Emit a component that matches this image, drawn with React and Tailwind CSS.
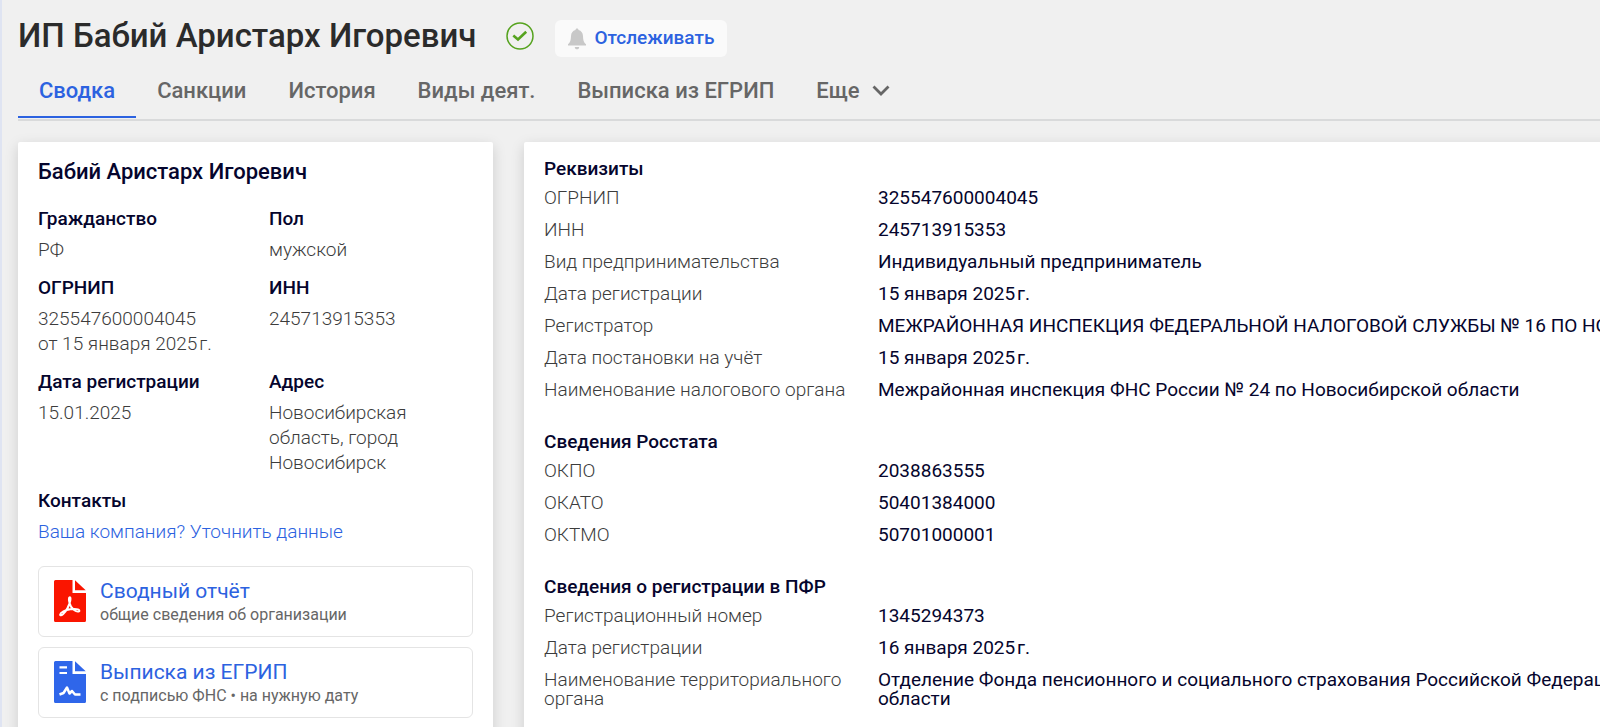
import React from 'react';

const tabs = ['Сводка', 'Санкции', 'История', 'Виды деят.', 'Выписка из ЕГРИП'];

const person = [
    { label: 'Гражданство', value: ['РФ'] },
    { label: 'Пол', value: ['мужской'] },
    { label: 'ОГРНИП', value: ['325547600004045', 'от 15 января 2025\u200aг.'] },
    { label: 'ИНН', value: ['245713915353'] },
    { label: 'Дата регистрации', value: ['15.01.2025'] },
    { label: 'Адрес', value: ['Новосибирская', 'область, город', 'Новосибирск'] },
];

const sections = [
    {
        title: 'Реквизиты',
        rows: [
            ['ОГРНИП', '325547600004045'],
            ['ИНН', '245713915353'],
            ['Вид предпринимательства', 'Индивидуальный предприниматель'],
            ['Дата регистрации', '15 января 2025\u200aг.'],
            ['Регистратор', 'МЕЖРАЙОННАЯ ИНСПЕКЦИЯ ФЕДЕРАЛЬНОЙ НАЛОГОВОЙ СЛУЖБЫ № 16 ПО НОВОСИБИРСКОЙ ОБЛАСТИ'],
            ['Дата постановки на учёт', '15 января 2025\u200aг.'],
            ['Наименование налогового органа', 'Межрайонная инспекция ФНС России № 24 по Новосибирской области'],
        ],
    },
    {
        title: 'Сведения Росстата',
        rows: [
            ['ОКПО', '2038863555'],
            ['ОКАТО', '50401384000'],
            ['ОКТМО', '50701000001'],
        ],
    },
    {
        title: 'Сведения о регистрации в ПФР',
        rows: [
            ['Регистрационный номер', '1345294373'],
            ['Дата регистрации', '16 января 2025\u200aг.'],
            ['Наименование территориального органа', 'Отделение Фонда пенсионного и социального страхования Российской Федерации по Новосибирской\nобласти'],
        ],
    },
];

const CheckIcon = () => (
    <svg className="h-7 w-7 shrink-0" viewBox="0 0 28 28" fill="none" stroke="#56a31f">
        <circle cx="14" cy="14" r="13" strokeWidth="1.5" />
        <path d="M7.3 13.4l4.7 4 8.2-7.6" strokeWidth="2.6" />
    </svg>
);

const BellIcon = () => (
    <svg className="h-[22px] w-[18px] shrink-0" viewBox="0 0 18 22" fill="#c8c8c8">
        <path d="M9 0.5c1 0 1.5.7 1.5 1.6 2.9.8 4.3 2.9 4.5 5.9.2 4.2.6 6.2 3 8.3v1.2H0v-1.2c2.4-2.1 2.8-4.1 3-8.3.2-3 1.6-5.1 4.5-5.9C7.5 1.2 8 .5 9 .5z" />
        <path d="M6.8 19h4.4c0 1.4-.9 2.3-2.2 2.3S6.8 20.4 6.8 19z" />
    </svg>
);

const PdfIcon = () => (
    <svg className="h-[42px] w-8 shrink-0" viewBox="0 0 32 42">
        <path d="M1.5 0H18.5V13H32V40.5Q32 42 30.5 42H1.5Q0 42 0 40.5V1.5Q0 0 1.5 0z" fill="#fa1500" />
        <path d="M21 0.3V10.3H31.7z" fill="#fa1500" />
        <path
            d="M15.4 22.5c-.6-2.3-.9-5.3.3-5.3s1 3 0 5.7c-1.2 3.8-3.6 8.3-6.3 11-1.6 1.6-3.4 2-3.3.7.2-2.1 5.2-4.6 10.2-5.3 4.6-.7 9-.3 9.1 1.4.1 1.5-2.9 1.1-5-.4-2.4-1.7-4.3-4.6-5-7.8z"
            fill="none"
            stroke="#fff"
            strokeWidth="1.9"
            strokeLinejoin="round"
        />
    </svg>
);

const SignedDocIcon = () => (
    <svg className="h-[42px] w-8 shrink-0" viewBox="0 0 32 42">
        <path d="M1.5 0H18.5V13H32V40.5Q32 42 30.5 42H1.5Q0 42 0 40.5V1.5Q0 0 1.5 0z" fill="#2f66ea" />
        <path d="M21 0.3V10.3H31.7z" fill="#2f66ea" />
        <path d="M5.5 6.3H13M5.5 12H13" stroke="#fff" strokeWidth="2.2" />
        <path d="M5.5 33.5l4-1.5 3.5-5.5 2.5 6 2.5-2.5 3 3.5H26.5" fill="none" stroke="#fff" strokeWidth="2.5" strokeLinejoin="round" />
    </svg>
);

const reports = [
    { title: 'Сводный отчёт', note: 'общие сведения об организации', Icon: PdfIcon },
    { title: 'Выписка из ЕГРИП', note: 'с подписью ФНС • на нужную дату', Icon: SignedDocIcon },
];

const PersonCard = () => (
    <section className="w-[475px] shrink-0 rounded-xs bg-white px-5 pt-[17px] pb-8 leading-[25px] shadow-[0_4px_14px_rgba(0,0,0,0.15)]">
        <h2 className="text-[22px] leading-[25px] font-medium">Бабий Аристарх Игоревич</h2>
        <dl className="mt-[22px] grid grid-cols-[231px_1fr] gap-y-[13px]">
            {person.map(({ label, value }) => (
                <div key={label}>
                    <dt className="font-medium">{label}</dt>
                    <dd className="mt-[6px] font-light text-[#3c3c3c]">
                        {value.map(line => <div key={line}>{line}</div>)}
                    </dd>
                </div>
            ))}
        </dl>
        <h3 className="mt-[13px] font-medium">Контакты</h3>
        <a href="#" className="mt-[6px] block font-light text-[#2c62e0]">Ваша компания? Уточнить данные</a>
        <div className="mt-[22px] flex flex-col gap-[10px]">
            {reports.map(({ title, note, Icon }) => (
                <a key={title} href="#" className="flex items-start gap-[14px] rounded-md border border-[#e4e4e4] px-[15px] pt-[13px] pb-[10px]">
                    <Icon />
                    <span className="block">
                        <span className="block text-[21px] leading-[22px] text-[#2c62e0]">{title}</span>
                        <span className="mt-[2px] block text-base leading-[22px] text-[#666]">{note}</span>
                    </span>
                </a>
            ))}
        </div>
    </section>
);

const DetailsCard = () => (
    <section className="min-w-[1400px] flex-1 rounded-xs bg-white px-5 pt-[14px] pb-8 leading-[19px] shadow-[0_4px_14px_rgba(0,0,0,0.15)]">
        {sections.map(({ title, rows }) => (
            <div key={title} className="mb-[23px]">
                <h3 className="leading-[26px] font-medium">{title}</h3>
                <table className="w-full table-fixed text-left">
                    <tbody>
                        {rows.map(([label, value]) => (
                            <tr key={label} className="align-top">
                                <th scope="row" className="w-[334px] pt-[6px] pr-6 pb-[7px] font-light text-[#3c3c3c]">{label}</th>
                                <td className="pt-[6px] pb-[7px] whitespace-pre-line">{value}</td>
                            </tr>
                        ))}
                    </tbody>
                </table>
            </div>
        ))}
    </section>
);

const App = () => {
    return (
        <div className="min-h-screen overflow-x-hidden border-l-2 border-[#dfe4f2] bg-[#f0f0f0] pl-4 font-['Roboto',sans-serif] text-[19px] text-[#05052d]">
            <header className="flex items-center pt-4">
                <div className="flex items-center gap-[30px] pb-[5px]">
                    <h1 className="text-[33px] leading-10 font-medium text-[#2b2b2b]">ИП Бабий Аристарх Игоревич</h1>
                    <CheckIcon />
                </div>
                <button type="button" className="ml-[21px] flex h-[37px] items-center gap-2 rounded-md bg-[#fafafa] px-[13px] font-medium text-[#2c62e0]">
                    <BellIcon />
                    Отслеживать
                </button>
            </header>
            <nav className="mt-[2px] flex border-b-2 border-[#d9dadb] text-[22px] leading-[25px] font-medium text-[#666]">
                {tabs.map((tab, i) => (
                    <a
                        key={tab}
                        href="#"
                        className={i === 0
                            ? 'mb-px border-b-2 border-[#2c62e0] px-[21px] pt-[15px] pb-[13px] text-[#2c62e0]'
                            : 'px-[21px] pt-[15px]'}
                    >
                        {tab}
                    </a>
                ))}
                <button type="button" className="flex items-center gap-3 self-start px-[21px] pt-[15px]">
                    Еще
                    <svg className="h-[11px] w-[18px]" viewBox="0 0 18 11" fill="none" stroke="#666" strokeWidth="2.8">
                        <path d="M1.5 1.5L9 9l7.5-7.5" />
                    </svg>
                </button>
            </nav>
            <main className="mt-[21px] flex gap-[31px]">
                <PersonCard />
                <DetailsCard />
            </main>
        </div>
    );
};

export default App;
